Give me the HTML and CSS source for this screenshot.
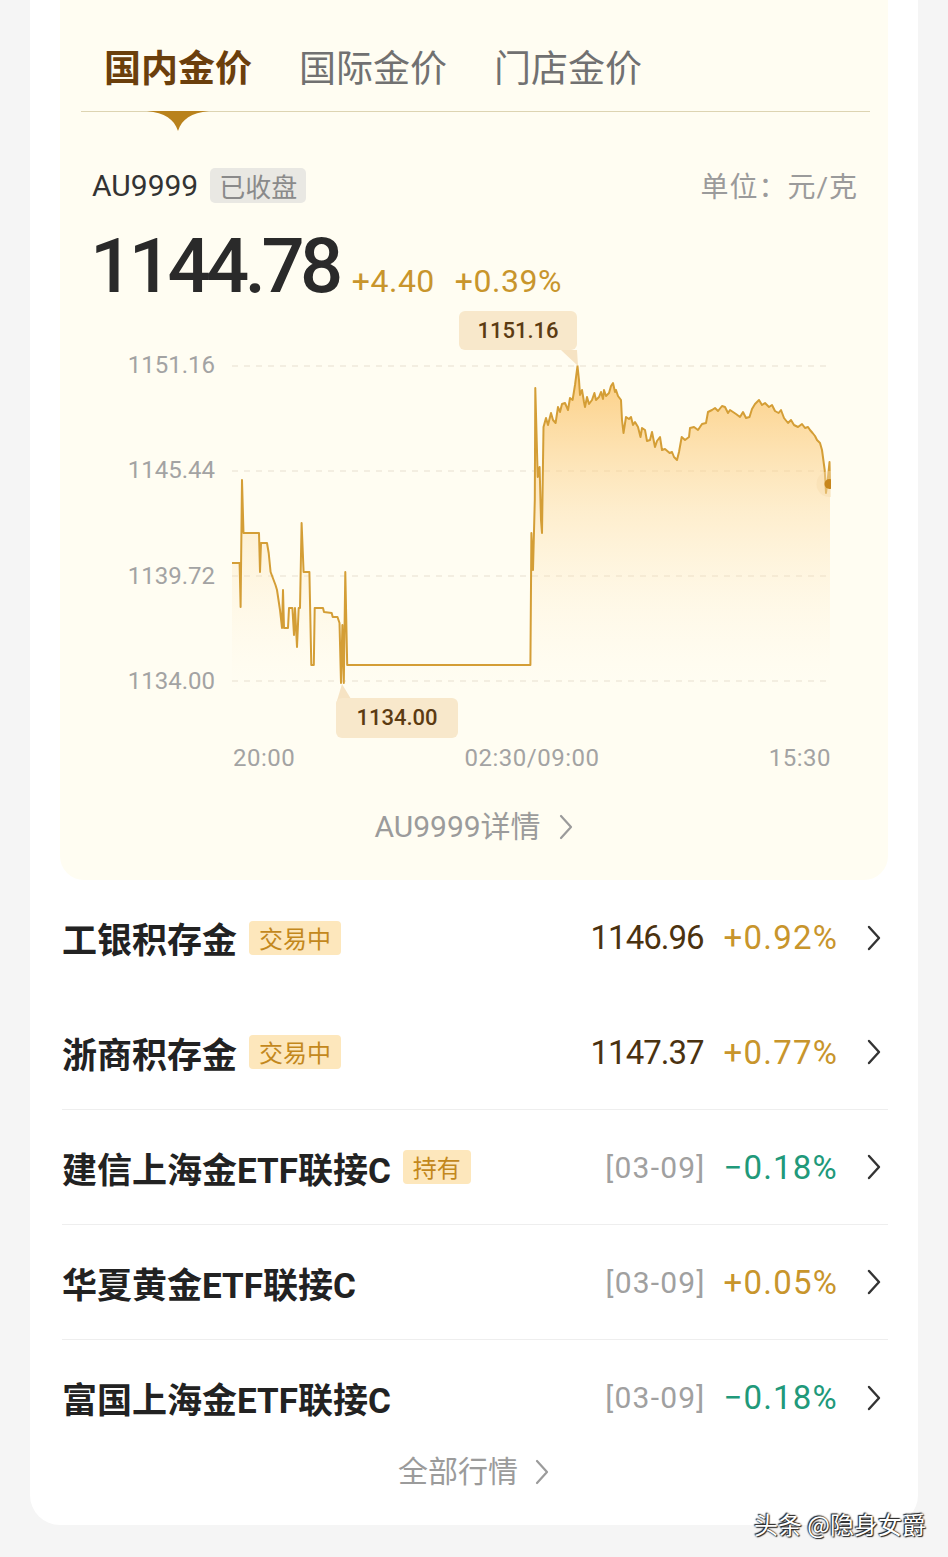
FILE: index.html
```html
<!DOCTYPE html>
<html lang="zh-CN">
<head>
	<meta charset="utf-8">
	<title>国内金价</title>
	<link rel="stylesheet" href="styles.css">
</head>
<body>
	<div class="card">
		<div class="panel">
			<div class="tabs">
				<span class="tab active">国内金价<svg class="tab-arrow" width="62" height="21" viewBox="0 0 62 21"><path d="M0 0H62C44 2 35 8 31 20C27 8 18 2 0 0Z" fill="#b9821c"/></svg></span>
				<span class="tab">国际金价</span>
				<span class="tab">门店金价</span>
			</div>

			<div class="quote-head">
				<span class="code">AU9999</span>
				<span class="badge grey">已收盘</span>
				<span class="unit">单位：元/克</span>
			</div>

			<div class="price-row">
				<span class="price">1144.78</span>
				<span class="change">+4.40</span>
				<span class="change second">+0.39%</span>
			</div>

			<div class="chart">
				<div class="y-axis">
					<span>1151.16</span>
					<span>1145.44</span>
					<span>1139.72</span>
					<span>1134.00</span>
				</div>
				<svg class="plot" width="600" height="354" viewBox="231 350 600 354">
					<defs>
						<linearGradient id="fill" gradientUnits="userSpaceOnUse" x1="0" y1="366" x2="0" y2="690">
							<stop offset="0" stop-color="#fbc46a" stop-opacity="0.85"/>
							<stop offset="0.45" stop-color="#fcd797" stop-opacity="0.4"/>
							<stop offset="1" stop-color="#fff2d8" stop-opacity="0"/>
						</linearGradient>
					</defs>
					<g class="grid">
						<line x1="232" y1="366" x2="830" y2="366"/>
						<line x1="232" y1="471" x2="830" y2="471"/>
						<line x1="232" y1="576" x2="830" y2="576"/>
						<line x1="232" y1="681" x2="830" y2="681"/>
					</g>
					<path class="area" fill="url(#fill)" d="M232,700 L232,563 239.6,563 240.6,607 242,480 243.5,533 259,533 260,572 261,543 267,543 268.7,553 270.6,572 275.5,585 277,590 280,610 282,628 283,590 284,628 288,628 289,608 292.4,608 294,635 295,608 297,647 298.7,608 300,608 301.6,523 303.6,572 309.4,572 311.3,665 313.8,665 314.7,608 323,608 324,612 331.7,613 332.7,617 337.5,617 339.5,623 341,683 342.4,625 343.8,683 345.3,572 347.2,665 530.4,665 531.4,533 533,570 534.8,500 535.3,388 537.7,477 539.6,467 541,520 542,533 543.5,427 546,418 548,425 551,413 553,420 555.6,423 558,407 560,412 562,404 565,403 568,410 570,398 572.6,400 575,385 577.5,366 579,380 580,395 582,390 584,402 585,407 587,397 589,404 592,400 594.4,393 596,400 599,397 601,392 603,399 604,390 606,396 609,393 611,386 613,383 615,392 616,390 618,396 621,400 622,420 623.5,433 626,417 629,419 631,417 633,425 635,422 638,427 640.5,437 642,428 645,430 647,441 650,440 652,432 655,447 657,441 660,437 662,450 665,449 669.6,453 672,452 674,457 677,460 679,452 681.7,437 685,440 689,437 690,428 694,427 698,430 702,424 706,423 708,412 712,410 715,408 718,411 722,406 725,407 728,413 730,410 733,412 736,414 740,417 743,412 746,418 749.5,417 752,409 755,404 759,400 762,405 765,403 769,407 772,405 775,411 778.6,413 781,410 784,418 788,423 791,420 794,425 798,427 802,424 805,428 808,427 810,430 812.6,433 815,436 817,440 820,443 822,450 824.7,470 826,493 828,477 829.5,462 830,483 L830,700 Z"/>
					<polyline class="line" points="232,563 239.6,563 240.6,607 242,480 243.5,533 259,533 260,572 261,543 267,543 268.7,553 270.6,572 275.5,585 277,590 280,610 282,628 283,590 284,628 288,628 289,608 292.4,608 294,635 295,608 297,647 298.7,608 300,608 301.6,523 303.6,572 309.4,572 311.3,665 313.8,665 314.7,608 323,608 324,612 331.7,613 332.7,617 337.5,617 339.5,623 341,683 342.4,625 343.8,683 345.3,572 347.2,665 530.4,665 531.4,533 533,570 534.8,500 535.3,388 537.7,477 539.6,467 541,520 542,533 543.5,427 546,418 548,425 551,413 553,420 555.6,423 558,407 560,412 562,404 565,403 568,410 570,398 572.6,400 575,385 577.5,366 579,380 580,395 582,390 584,402 585,407 587,397 589,404 592,400 594.4,393 596,400 599,397 601,392 603,399 604,390 606,396 609,393 611,386 613,383 615,392 616,390 618,396 621,400 622,420 623.5,433 626,417 629,419 631,417 633,425 635,422 638,427 640.5,437 642,428 645,430 647,441 650,440 652,432 655,447 657,441 660,437 662,450 665,449 669.6,453 672,452 674,457 677,460 679,452 681.7,437 685,440 689,437 690,428 694,427 698,430 702,424 706,423 708,412 712,410 715,408 718,411 722,406 725,407 728,413 730,410 733,412 736,414 740,417 743,412 746,418 749.5,417 752,409 755,404 759,400 762,405 765,403 769,407 772,405 775,411 778.6,413 781,410 784,418 788,423 791,420 794,425 798,427 802,424 805,428 808,427 810,430 812.6,433 815,436 817,440 820,443 822,450 824.7,470 826,493 828,477 829.5,462 830,483"/>
					<polygon class="tail" points="561,350 577,350 578,366"/>
					<polygon class="tail" points="336,704 354,704 342,684"/>
					<circle cx="829.5" cy="484" r="13" fill="#f6dcae" fill-opacity="0.45"/>
					<circle cx="829.5" cy="484" r="5" fill="#c7861b"/>
				</svg>
				<div class="tip tip-high">1151.16</div>
				<div class="tip tip-low">1134.00</div>
			</div>

			<div class="x-axis">
				<span>20:00</span>
				<span>02:30/09:00</span>
				<span>15:30</span>
			</div>

			<a class="more">AU9999详情<svg width="16" height="26" viewBox="0 0 16 26"><path d="M3 2l10 11-10 11" fill="none" stroke="currentColor" stroke-width="2.2" stroke-linecap="round" stroke-linejoin="round"/></svg></a>
		</div>

		<ul class="list">
			<li class="row">
				<span class="name">工银积存金</span>
				<span class="badge tag">交易中</span>
				<span class="vals">
					<span class="num">1146.96</span>
					<span class="pct up">+0.92%</span>
					<svg class="chev" width="16" height="26" viewBox="0 0 16 26"><path d="M3 2l10 11-10 11" fill="none" stroke="currentColor" stroke-width="2.4" stroke-linecap="round" stroke-linejoin="round"/></svg>
				</span>
			</li>
			<li class="row sep">
				<span class="name">浙商积存金</span>
				<span class="badge tag">交易中</span>
				<span class="vals">
					<span class="num">1147.37</span>
					<span class="pct up">+0.77%</span>
					<svg class="chev" width="16" height="26" viewBox="0 0 16 26"><path d="M3 2l10 11-10 11" fill="none" stroke="currentColor" stroke-width="2.4" stroke-linecap="round" stroke-linejoin="round"/></svg>
				</span>
			</li>
			<li class="row sep">
				<span class="name">建信上海金ETF联接C</span>
				<span class="badge tag">持有</span>
				<span class="vals">
					<span class="date">[03-09]</span>
					<span class="pct down">−0.18%</span>
					<svg class="chev" width="16" height="26" viewBox="0 0 16 26"><path d="M3 2l10 11-10 11" fill="none" stroke="currentColor" stroke-width="2.4" stroke-linecap="round" stroke-linejoin="round"/></svg>
				</span>
			</li>
			<li class="row sep">
				<span class="name">华夏黄金ETF联接C</span>
				<span class="vals">
					<span class="date">[03-09]</span>
					<span class="pct up">+0.05%</span>
					<svg class="chev" width="16" height="26" viewBox="0 0 16 26"><path d="M3 2l10 11-10 11" fill="none" stroke="currentColor" stroke-width="2.4" stroke-linecap="round" stroke-linejoin="round"/></svg>
				</span>
			</li>
			<li class="row">
				<span class="name">富国上海金ETF联接C</span>
				<span class="vals">
					<span class="date">[03-09]</span>
					<span class="pct down">−0.18%</span>
					<svg class="chev" width="16" height="26" viewBox="0 0 16 26"><path d="M3 2l10 11-10 11" fill="none" stroke="currentColor" stroke-width="2.4" stroke-linecap="round" stroke-linejoin="round"/></svg>
				</span>
			</li>
		</ul>

		<a class="more all">全部行情<svg width="16" height="26" viewBox="0 0 16 26"><path d="M3 2l10 11-10 11" fill="none" stroke="currentColor" stroke-width="2.2" stroke-linecap="round" stroke-linejoin="round"/></svg></a>
	</div>

	<div class="watermark">头条 @隐身女爵</div>
</body>
</html>
```

FILE: styles.css
```css
* {
	box-sizing: border-box;
}

body {
	margin: 0;
	position: relative;
	min-height: 1557px;
	background-color: #f5f5f5;
	color: #333;
	font-family: Roboto, "Noto Sans CJK SC", sans-serif;
}

.card {
	width: 888px;
	margin-left: 30px;
	padding-bottom: 36px;
	background-color: #fff;
	border-radius: 0 0 30px 30px;
}

.panel {
	margin: 0 30px;
	padding-bottom: 33px;
	background-color: #fffdf2;
	border-radius: 0 0 24px 24px;
}

/* tabs */
.tabs {
	display: flex;
	gap: 47px;
	margin: 0 18px 0 21px;
	padding: 40px 0 19px 23px;
	border-bottom: 1px solid #ddd4b2;
}

.tab {
	position: relative;
	font-family: "Noto Sans CJK SC", sans-serif;
	font-size: 37px;
	line-height: 52px;
	color: #717171;
}

.tab.active {
	color: #6b3f0c;
	font-weight: 700;
}

.tab-arrow {
	position: absolute;
	left: 50%;
	top: calc(100% + 19px);
	transform: translateX(-50%);
}

/* quote */
.quote-head {
	display: flex;
	align-items: center;
	height: 36px;
	margin-top: 55px;
	padding: 0 30px 0 32px;
}

.code {
	font-size: 30px;
	color: #333;
}

.badge {
	font-family: "Noto Sans CJK SC", sans-serif;
	border-radius: 5px;
}

.badge.grey {
	margin-left: 12px;
	padding: 0 9px;
	font-size: 26px;
	line-height: 35px;
	background-color: #e9e8e3;
	color: #8a8a8a;
}

.unit {
	margin-left: auto;
	font-size: 28px;
	letter-spacing: 1px;
	color: #9b9b9b;
}

.price-row {
	display: flex;
	align-items: baseline;
	margin-top: 25px;
	padding-left: 30px;
}

.price {
	font-size: 76px;
	line-height: 76px;
	font-weight: 500;
	letter-spacing: -4.5px;
	color: #2a2a2a;
}

.change {
	margin-left: 13px;
	font-size: 32px;
	line-height: 32px;
	letter-spacing: 0.5px;
	color: #c8952c;
}

.change.second {
	margin-left: 20px;
}

/* chart */
.chart {
	position: relative;
	display: grid;
	grid-template-columns: 155px 600px;
	column-gap: 16px;
	align-items: start;
	margin-top: 46px;
}

.y-axis {
	display: flex;
	flex-direction: column;
	justify-content: space-between;
	height: 346px;
	text-align: right;
	font-size: 24px;
	line-height: 30px;
	color: #a3a3a3;
}

.plot {
	display: block;
}

.grid line {
	stroke: #efe9dc;
	stroke-width: 1.5;
	stroke-dasharray: 6 6;
}

.line {
	fill: none;
	stroke: #d49e36;
	stroke-width: 2;
	stroke-linejoin: round;
}

.tail {
	fill: #f6e3c3;
}

.tip {
	position: absolute;
	text-align: center;
	font-size: 22px;
	font-weight: 500;
	border-radius: 6px;
	background-color: #f8e8cb;
	color: #5c3b12;
}

.tip-high {
	left: 399px;
	top: -39px;
	width: 118px;
	line-height: 39px;
}

.tip-low {
	left: 276px;
	top: 348px;
	width: 122px;
	line-height: 40px;
}

.x-axis {
	display: flex;
	justify-content: space-between;
	margin: 39px 57px 0 173px;
	font-size: 24px;
	line-height: 30px;
	letter-spacing: 0.5px;
	color: #a3a3a3;
}

.more {
	display: flex;
	justify-content: center;
	align-items: center;
	gap: 17px;
	margin-top: 34px;
	font-size: 30px;
	line-height: 40px;
	color: #9b9b9b;
}

.more.all {
	margin-top: 0;
	line-height: 34px;
	gap: 16px;
}

/* list */
.list {
	margin: 0;
	padding: 0 30px 0 32px;
	list-style: none;
}

.row {
	display: flex;
	align-items: center;
	height: 115px;
}

.row.sep {
	border-bottom: 1px solid #eeeeee;
}

.name {
	font-size: 35px;
	font-weight: 700;
	color: #222;
}

.badge.tag {
	margin-left: 12px;
	padding: 0 10px;
	font-size: 24px;
	line-height: 34px;
	border-radius: 4px;
	background-color: #fde7bc;
	color: #c3881d;
}

.vals {
	display: flex;
	align-items: center;
	margin-left: auto;
}

.num {
	font-size: 33px;
	letter-spacing: -1px;
	color: #4b3210;
}

.date {
	margin-right: -2px;
	font-size: 30px;
	letter-spacing: 1.2px;
	color: #a0a0a0;
}

.pct {
	margin-left: 20px;
	font-size: 33px;
	letter-spacing: 1.2px;
}

.pct.up {
	color: #c8952c;
}

.pct.down {
	color: #21997a;
}

.chev {
	margin: 0 6px 0 28px;
	color: #333;
}

.watermark {
	position: absolute;
	right: 22px;
	top: 1508px;
	font-family: "Noto Sans CJK SC", sans-serif;
	font-size: 24px;
	line-height: 32px;
	color: #fff;
	text-shadow: 0 0 2px #222, 1px 1px 1px #222, -1px -1px 1px #222;
}
```
